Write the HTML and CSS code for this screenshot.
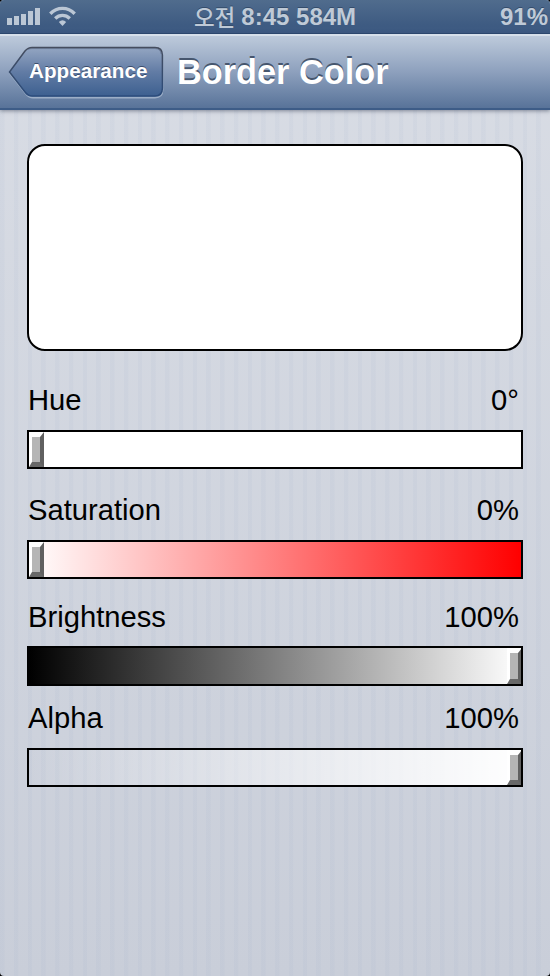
FILE: index.html
```html
<!DOCTYPE html>
<html lang="ko">
<head>
    <meta charset="UTF-8">
    <meta name="viewport" content="width=device-width, initial-scale=1.0">
    <title>Border Color</title>
    <link rel="stylesheet" href="styles.css">
</head>
<body>
    <div class="screen">
        <!-- Status Bar -->
        <div class="status-bar">
            <div class="status-left">
                <svg class="signal" width="33" height="18" viewBox="0 0 33 18">
                    <path d="M0 11h5v7H0zM7 9h5v9H7zM14 7h5v11h-5zM21 4h5v14h-5zM28 1h5v17h-5z" fill="#bbc7d5"/>
                </svg>
                <svg class="wifi" width="27" height="20" viewBox="0 0 27 20">
                    <g fill="none" stroke="#bbc7d5" stroke-width="3.4">
                        <path d="M1.3 7.7C8.2 0.6 18.8 0.6 25.7 7.7"/>
                        <path d="M6.2 12.4C10.4 8.4 16.6 8.4 20.8 12.4"/>
                    </g>
                    <path d="M9.8 16Q13.5 12.6 17.2 16L13.5 20z" fill="#bbc7d5"/>
                </svg>
            </div>
            <div class="status-time"><span class="meridiem">오전</span>8:45 584M</div>
            <div class="status-battery">91%</div>
        </div>

        <!-- Navigation Bar -->
        <header class="nav-bar">
            <button class="back-button">
                <svg class="back-shape" width="158" height="54" viewBox="0 0 158 54">
                    <defs>
                        <linearGradient id="back-fill" x1="0" y1="0" x2="0" y2="1">
                            <stop offset="0" stop-color="#94a6c2"/>
                            <stop offset="0.5" stop-color="#627ca5"/>
                            <stop offset="1" stop-color="#3d6090"/>
                        </linearGradient>
                        <linearGradient id="back-line" x1="0" y1="0" x2="0" y2="1">
                            <stop offset="0" stop-color="#454d5e"/>
                            <stop offset="1" stop-color="#2b4c7c"/>
                        </linearGradient>
                    </defs>
                    <path d="M24 2H147Q154.6 2 154.6 10V44Q154.6 51.6 147 51.6H25Q21 51.6 18 48L1.5 27" fill="none" stroke="#9dafc7" stroke-width="1.6"/>
                    <path d="M24 1.4H147Q154.4 1.4 154.4 9V42Q154.4 50 147 50H24Q20 50 17 46L1.5 26 17 5Q20 1.4 24 1.4z" fill="url(#back-fill)" stroke="url(#back-line)" stroke-width="1.5"/>
                    <path d="M20 3.4Q22 2.6 24 2.6H147Q152.4 2.6 153.2 8" fill="none" stroke="#43506a" stroke-opacity="0.4"/>
                </svg>
                <span class="back-label">Appearance</span>
            </button>
            <h1 class="nav-title">Border Color</h1>
        </header>

        <!-- Color Editor -->
        <main class="content">
            <div class="preview"></div>

            <section class="slider hue">
                <div class="slider-head"><span>Hue</span><span>0°</span></div>
                <div class="track"><div class="thumb"></div></div>
            </section>

            <section class="slider saturation">
                <div class="slider-head"><span>Saturation</span><span>0%</span></div>
                <div class="track"><div class="thumb"></div></div>
            </section>

            <section class="slider brightness">
                <div class="slider-head"><span>Brightness</span><span>100%</span></div>
                <div class="track at-end"><div class="thumb"></div></div>
            </section>

            <section class="slider alpha">
                <div class="slider-head"><span>Alpha</span><span>100%</span></div>
                <div class="track at-end"><div class="thumb"></div></div>
            </section>
        </main>
    </div>
</body>
</html>
```
FILE: styles.css
```css
/* General Styling */
* {
    box-sizing: border-box;
}
body {
    margin: 0;
    background: #000;
    color: #000;
    font-family: "Liberation Sans", "Noto Sans CJK KR", sans-serif;
}
.screen {
    width: 550px;
    height: 976px;
    overflow: hidden;
    border-radius: 4px;
    background:
        repeating-linear-gradient(90deg, rgba(140, 160, 195, 0.07) 0 4px, transparent 5px 13.75px),
        linear-gradient(#d9dde5, #c9ced9);
}

/* Status Bar */
.status-bar {
    display: grid;
    grid-template-columns: 1fr auto 1fr;
    height: 34px;
    border-bottom: 1px solid #2c4a72;
    background: linear-gradient(#506c8d, #3e5b82 75%, #3d5a82);
    color: #bfcad7;
    font-size: 24px;
    font-weight: bold;
    line-height: 34px;
    text-shadow: 0 -1px 0 #344c6b;
}
.status-left {
    display: flex;
    align-items: flex-start;
    gap: 9px;
    padding: 7px 0 0 7px;
}
.wifi {
    margin-top: -1px;
}
.status-time {
    display: flex;
    gap: 6px;
    white-space: nowrap;
}
.meridiem {
    font-family: "Noto Sans CJK KR", sans-serif;
    font-size: 22.5px;
    font-weight: 500;
    line-height: 33px;
}
.status-battery {
    padding-right: 2px;
    text-align: right;
}

/* Navigation Bar */
.nav-bar {
    display: flex;
    height: 76px;
    padding: 10px 0 0 8px;
    border-top: 2px solid #d7e0ea;
    border-bottom: 2px solid #3d5c87;
    background: linear-gradient(#bdcadb, #8da0bd 50%, #587399);
    box-shadow: 0 1px 4px rgba(50, 60, 80, 0.55);
    color: #fff;
}
.back-button {
    display: grid;
    width: 158px;
    height: 54px;
    padding: 0;
    border: none;
    background: none;
    color: #fff;
    font-family: inherit;
}
.back-shape,
.back-label {
    grid-area: 1 / 1;
}
.back-label {
    padding: 0 0 0 21px;
    font-size: 20.7px;
    font-weight: bold;
    line-height: 50px;
    text-align: left;
    text-shadow: 0 -1.5px 0 #3b4d6b;
}
.nav-title {
    margin: 0 0 0 11px;
    font-size: 34.3px;
    font-weight: bold;
    line-height: 52px;
    text-shadow: 0 -2px 0 #46566e;
    white-space: nowrap;
}

/* Color Preview */
.content {
    padding: 34px 27px 0;
}
.preview {
    height: 207px;
    border: 2px solid #000;
    border-radius: 18px;
    background: #fff;
}

/* Sliders */
.slider {
    margin-top: 32px;
}
.slider-head {
    display: flex;
    justify-content: space-between;
    height: 47px;
    padding: 0 4px 0 1px;
    font-size: 29.2px;
    line-height: 34px;
}
.track {
    display: flex;
    height: 39px;
    overflow: hidden;
    border: 2px solid #000;
    background: #fff;
}
.at-end {
    justify-content: flex-end;
}
.thumb {
    width: 15px;
    border: solid;
    border-width: 5px 4px 5px 3px;
    border-color: #fff #606060 #686868 #fff;
    background: #b5b5b5;
    filter: blur(0.6px);
}
.at-end .thumb {
    margin-right: -1px;
}
.saturation {
    margin-top: 24px;
}
.saturation .track {
    background: linear-gradient(90deg, #fff, #f00);
}
.brightness {
    margin-top: 21px;
}
.brightness .slider-head {
    height: 46px;
}
.brightness .track {
    height: 40px;
    background: linear-gradient(90deg, #000, #fff);
}
.alpha {
    margin-top: 15px;
}
.alpha .track {
    background: linear-gradient(90deg, rgba(255, 255, 255, 0), #fff) border-box;
}
```
